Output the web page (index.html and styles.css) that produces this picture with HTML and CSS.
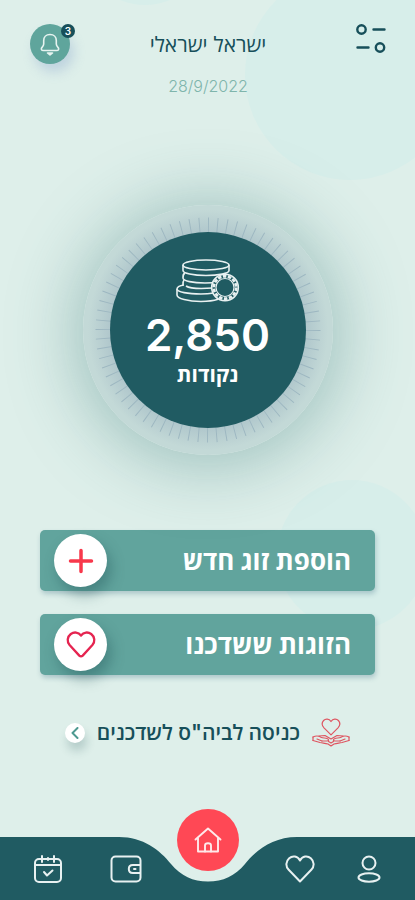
FILE: index.html
```html
<!DOCTYPE html>
<html lang="he" dir="rtl">
<head>
  <meta charset="UTF-8" />
  <meta name="viewport" content="width=device-width, initial-scale=1" />
  <title>שדכנים</title>
  <link rel="stylesheet" href="styles.css">
</head>
<body>

  <!-- Background circles -->
  <div class="backdrop" aria-hidden="true">
    <span class="bubble bubble-top"></span>
    <span class="bubble bubble-small"></span>
    <span class="bubble bubble-middle"></span>
  </div>

  <!-- Header -->
  <header class="header">
    <button type="button" class="icon-button" aria-label="תפריט">
      <svg width="30" height="30" viewBox="0 0 30 30" fill="none" stroke="#174f5a" stroke-width="2.400">
        <circle cx="5.500" cy="5.500" r="4.200" />
        <path d="M17.500 5.500h11M1.500 23.500h11" stroke-linecap="round" />
        <circle cx="24" cy="23.500" r="4.200" />
      </svg>
    </button>
    <div class="header-text">
      <h1 class="user-name">ישראל ישראלי</h1>
      <p class="date">28/9/2022</p>
    </div>
    <button type="button" class="bell" aria-label="התראות">
      <svg width="22" height="24" viewBox="0 0 22 24" fill="none" stroke="#e6f3f0" stroke-width="1.6" stroke-linecap="round" stroke-linejoin="round">
        <path d="M11 2.500c-4 0-6.300 2.800-6.300 6v3.400c0 1.300-.6 2.200-1.500 3.200-1.600 1.700-.9 3.400 1.300 3.400h13c2.200 0 2.900-1.700 1.300-3.400-.9-1-1.500-1.900-1.500-3.200V8.500c0-3.200-2.300-6-6.300-6z" />
        <path d="M8.500 21L11 23l2.500-2z" fill="#e6f3f0" />
      </svg>
      <span class="bell-badge">3</span>
    </button>
  </header>

  <main class="content">

    <!-- Points dial -->
    <section class="dial">
      <svg class="dial-ticks" viewBox="0 0 250 250" aria-hidden="true">
        <circle cx="125" cy="125" r="105" pathLength="360" />
      </svg>
      <div class="dial-face">
        <svg width="64" height="44" viewBox="0 0 64 44" fill="none" stroke="#e8f1f1" stroke-width="1.6" stroke-linejoin="round">
          <ellipse cx="30" cy="6" rx="23" ry="5" />
          <path d="M7 6v5.500c0 2.700 10 5 23 5s23-2.300 23-5V6" />
          <path d="M9 14c-2 1-2 2-2 5 0 3 10 5 22 5 6 0 10-.4 13-1" />
          <path d="M8 21c-1 1-1 2-1 5" />
          <path d="M8 26c-4 .6-7 2-7 4 0 3 11 5 24 5 5 0 9-.4 13-1" />
          <path d="M1 30v6c0 3.500 11 6.500 24 6.500 7 0 12-.5 17-2.200M10 27c3 2 13 3 27 2" />
          <circle cx="49" cy="28.500" r="13.300" fill="#205b62" />
          <circle cx="49" cy="28.500" r="11.200" stroke-width="2.800" stroke-dasharray="3.500 1.530" />
          <circle cx="49" cy="28.500" r="9" stroke-width="1.200" />
        </svg>
        <strong class="points">2,850</strong>
        <span class="points-label">נקודות</span>
      </div>
    </section>

    <!-- Main actions -->
    <div class="actions">
      <button type="button" class="action">
        <span>הוספת זוג חדש</span>
        <span class="action-icon">
          <svg width="26" height="26" viewBox="0 0 26 26" fill="none" stroke="#f8384b" stroke-width="3.500" stroke-linecap="round">
            <path d="M13 2.500v21M2.500 13h21" />
          </svg>
        </span>
      </button>
      <button type="button" class="action">
        <span>הזוגות ששדכנו</span>
        <span class="action-icon">
          <svg width="30" height="27" viewBox="0 0 30 27" fill="none" stroke="#e52450" stroke-width="2.300" stroke-linejoin="round">
            <path d="M15 4.500C12.300 1 8 .7 4.800 3 1 6 .8 10.600 3.600 14l9.700 10.600c1.100 1.100 2.300 1.100 3.400 0L26.400 14c2.800-3.400 2.600-8-1.200-11C22 .7 17.700 1 15 4.500z" />
          </svg>
        </span>
      </button>
    </div>

    <!-- School link -->
    <a href="#" class="school-link">
      <svg width="38" height="30" viewBox="0 0 38 30" fill="none" stroke="#de5561" stroke-width="1.200" stroke-linecap="round" stroke-linejoin="round">
        <path d="M19 3.500c-2-3-5.500-3-7.400-1-2 2.200-1.700 5 .4 7.300l7 7 7-7c2.100-2.300 2.400-5.100.4-7.300-1.900-2-5.400-2-7.400 1z" />
        <path d="M1 19c4-2 6-1 8 .2 2 1 4 .6 6 1.300 2.300.9 2 2.500 0 2.500h-5" />
        <path d="M37 19c-4-2-6-1-8 .2-2 1-4 .6-6 1.300-2.300.9-2 2.500 0 2.500h5" />
        <path d="M1 22.500l7 2c3 .7 5 .5 8 1.500l3 2 3-2c3-1 5-.8 8-1.500l7-2" />
        <path d="M1 19v3.500M37 19v3.500M7 18l6-.5 6 3.500 6-3.500 6 .5M16.500 23.500L19 25l2.500-1.500M5 21l5 2M33 21l-5 2" />
      </svg>
      <span>כניסה לביה"ס לשדכנים</span>
      <span class="chevron">
        <svg width="8" height="12" viewBox="0 0 8 12" fill="none" stroke="#4d9990" stroke-width="2" stroke-linecap="round" stroke-linejoin="round">
          <path d="M6.500 1L1.500 6l5 5" />
        </svg>
      </span>
    </a>
  </main>

  <!-- Bottom navigation -->
  <nav class="tabbar" aria-label="ניווט ראשי">
    <div class="tabbar-bg" aria-hidden="true">
      <span></span>
      <svg width="178" height="63" viewBox="0 0 178 63">
        <path d="M0 0C24 0 41 13 52 27c10 12 22 17.500 37 17.500S116 39 126 27C137 13 154 0 178 0v63H0z" fill="#205b62" />
      </svg>
      <span></span>
    </div>
    <div class="tabs tabs-start">
      <a href="#" aria-label="פרופיל">
        <svg width="24" height="28" viewBox="0 0 24 28" fill="none" stroke="#e8f1f1" stroke-width="2">
          <circle cx="12" cy="8" r="6.500" />
          <ellipse cx="12" cy="22.500" rx="10.500" ry="4.200" />
        </svg>
      </a>
      <a href="#" aria-label="מועדפים">
        <svg width="30" height="28" viewBox="0 0 30 28" fill="none" stroke="#e8f1f1" stroke-width="2" stroke-linejoin="round">
          <path d="M15 5.500C12.500.8 7.500.3 4.200 3.200.5 6.500.5 11.400 3.700 14.700L15 26.500l11.300-11.800c3.200-3.300 3.200-8.200-.5-11.500C22.500.3 17.500.8 15 5.500z" />
        </svg>
      </a>
    </div>
    <a href="#" class="home" aria-label="בית">
      <svg width="28" height="28" viewBox="0 0 28 28" fill="none" stroke="#ffe9ea" stroke-width="1.900" stroke-linecap="round" stroke-linejoin="round">
        <path d="M4 12v13.500h20V12M1.500 13.500L14 2.500l12.500 11" />
        <path d="M11 25.500v-6c0-3 6-3 6 0v6" />
      </svg>
    </a>
    <div class="tabs tabs-end">
      <a href="#" aria-label="ארנק">
        <svg width="32" height="28" viewBox="0 0 32 28" fill="none" stroke="#e8f1f1" stroke-width="2" stroke-linejoin="round">
          <rect x="1.500" y="1.500" width="29" height="25" rx="4" />
          <path d="M30.500 10h-7.700c-5.300 0-5.300 8 0 8h7.700" />
          <path d="M24 14h1.500" stroke-linecap="round" />
        </svg>
      </a>
      <a href="#" aria-label="יומן">
        <svg width="28" height="28" viewBox="0 0 28 28" fill="none" stroke="#e8f1f1" stroke-width="2" stroke-linecap="round" stroke-linejoin="round">
          <rect x="1" y="4" width="26" height="23" rx="4" />
          <path d="M1.500 10h25M8 1v6M14 3v2M20 1v6" />
          <path d="M10 17l3 3.500 5.500-5" />
        </svg>
      </a>
    </div>
  </nav>

</body>
</html>
```

FILE: styles.css
```css
/* Base and body */
* {
  box-sizing: border-box;
}

body {
  position: relative;
  margin: 0;
  min-height: 100vh;
  display: flex;
  flex-direction: column;
  overflow-x: hidden;
  background: #deefea;
  color: #174f5a;
  font-family: Inter, "Open Sans", "Liberation Sans", sans-serif;
}

button {
  border: none;
  padding: 0;
  font-family: inherit;
  cursor: pointer;
}

a {
  color: inherit;
  text-decoration: none;
}

svg {
  display: block;
}

/* Background circles */
.backdrop {
  position: absolute;
  inset: 0;
  overflow: hidden;
  z-index: -1;
}

.bubble {
  position: absolute;
  border-radius: 50%;
  background: #d7eeea;
}

.bubble-top {
  width: 210px;
  height: 210px;
  top: -30px;
  right: -40px;
}

.bubble-small {
  width: 130px;
  height: 130px;
  top: -125px;
  left: 80px;
}

.bubble-middle {
  width: 150px;
  height: 150px;
  top: 480px;
  right: -12px;
}

/* Header */
.header {
  display: grid;
  grid-template-columns: 1fr auto 1fr;
  align-items: start;
  padding: 24px 29px 0 30px;
}

.icon-button {
  justify-self: start;
  background: none;
}

.header-text {
  padding-top: 9px;
  text-align: center;
}

.user-name {
  margin: 0;
  font-size: 21px;
  line-height: 24px;
  font-weight: 400;
}

.date {
  margin: 17px 0 0;
  font-size: 16px;
  line-height: 24px;
  font-weight: 300;
  color: #7fb5ac;
}

.bell {
  position: relative;
  justify-self: end;
  width: 40px;
  height: 40px;
  display: flex;
  align-items: center;
  justify-content: center;
  border-radius: 50%;
  background: #5fa59c;
  box-shadow: 4px 8px 12px rgba(120, 150, 200, 0.3);
}

.bell-badge {
  position: absolute;
  top: 0;
  right: -5px;
  width: 14px;
  height: 14px;
  border-radius: 50%;
  background: #174f5a;
  color: #fff;
  font-size: 10px;
  line-height: 14px;
  font-weight: 600;
}

/* Points dial */
.content {
  display: flex;
  flex-direction: column;
  padding: 107px 40px 0;
}

.dial {
  position: relative;
  align-self: center;
  width: 250px;
  height: 250px;
  display: flex;
  align-items: center;
  justify-content: center;
  border-radius: 50%;
  background: radial-gradient(closest-side, #b0c7cc 78%, #c3d9d7 96%);
  box-shadow: 0 4px 70px 6px rgba(50, 115, 115, 0.4);
}

.dial-ticks {
  position: absolute;
  inset: 0;
  fill: none;
  stroke: #9db7c1;
  stroke-width: 15px;
  stroke-dasharray: 0.5 4.5;
}

.dial-face {
  position: relative;
  width: 196px;
  height: 196px;
  padding-top: 27px;
  display: flex;
  flex-direction: column;
  align-items: center;
  border-radius: 50%;
  background: #205b62;
  color: #fff;
}

.points {
  margin-top: 8px;
  font-size: 44px;
  line-height: 48px;
  font-weight: 600;
}

.points-label {
  margin-top: 2px;
  font-size: 21px;
  line-height: 28px;
  font-weight: 700;
}

/* Main actions */
.actions {
  display: flex;
  flex-direction: column;
  gap: 23px;
  margin-top: 75px;
}

.action {
  display: flex;
  justify-content: space-between;
  align-items: center;
  height: 61px;
  padding: 0 24px 0 14px;
  border-radius: 5px;
  background: #61a49d;
  box-shadow: 1px 3px 5px rgba(60, 110, 130, 0.3);
  color: #fff;
  font-size: 26px;
  line-height: 32px;
  font-weight: 700;
}

.action-icon {
  width: 53px;
  height: 53px;
  display: flex;
  align-items: center;
  justify-content: center;
  border-radius: 50%;
  background: #fff;
  box-shadow: 4px 8px 14px rgba(20, 70, 75, 0.35);
}

/* School link */
.school-link {
  display: flex;
  align-items: center;
  gap: 12px;
  margin-top: 42px;
  padding-right: 25px;
  font-size: 21px;
  line-height: 32px;
  font-weight: 600;
  white-space: nowrap;
}

.chevron {
  width: 20px;
  height: 20px;
  display: flex;
  align-items: center;
  justify-content: center;
  border-radius: 50%;
  background: #fff;
  box-shadow: 2px 8px 10px rgba(20, 70, 75, 0.2);
}

/* Bottom navigation */
.tabbar {
  position: relative;
  margin-top: auto;
  height: 63px;
  display: grid;
  grid-template-columns: 1fr 62px 1fr;
  align-items: center;
  padding: 0 34px;
}

.tabbar-bg {
  position: absolute;
  inset: 0;
  display: flex;
  z-index: -1;
}

.tabbar-bg span {
  flex: 1;
  background: #205b62;
}

.tabs {
  display: flex;
}

.tabs-start {
  gap: 42px;
}

.tabs-end {
  justify-content: flex-end;
  gap: 48px;
}

.home {
  width: 62px;
  height: 62px;
  margin-top: -58px;
  display: flex;
  align-items: center;
  justify-content: center;
  border-radius: 50%;
  background: #ff4855;
}
```
